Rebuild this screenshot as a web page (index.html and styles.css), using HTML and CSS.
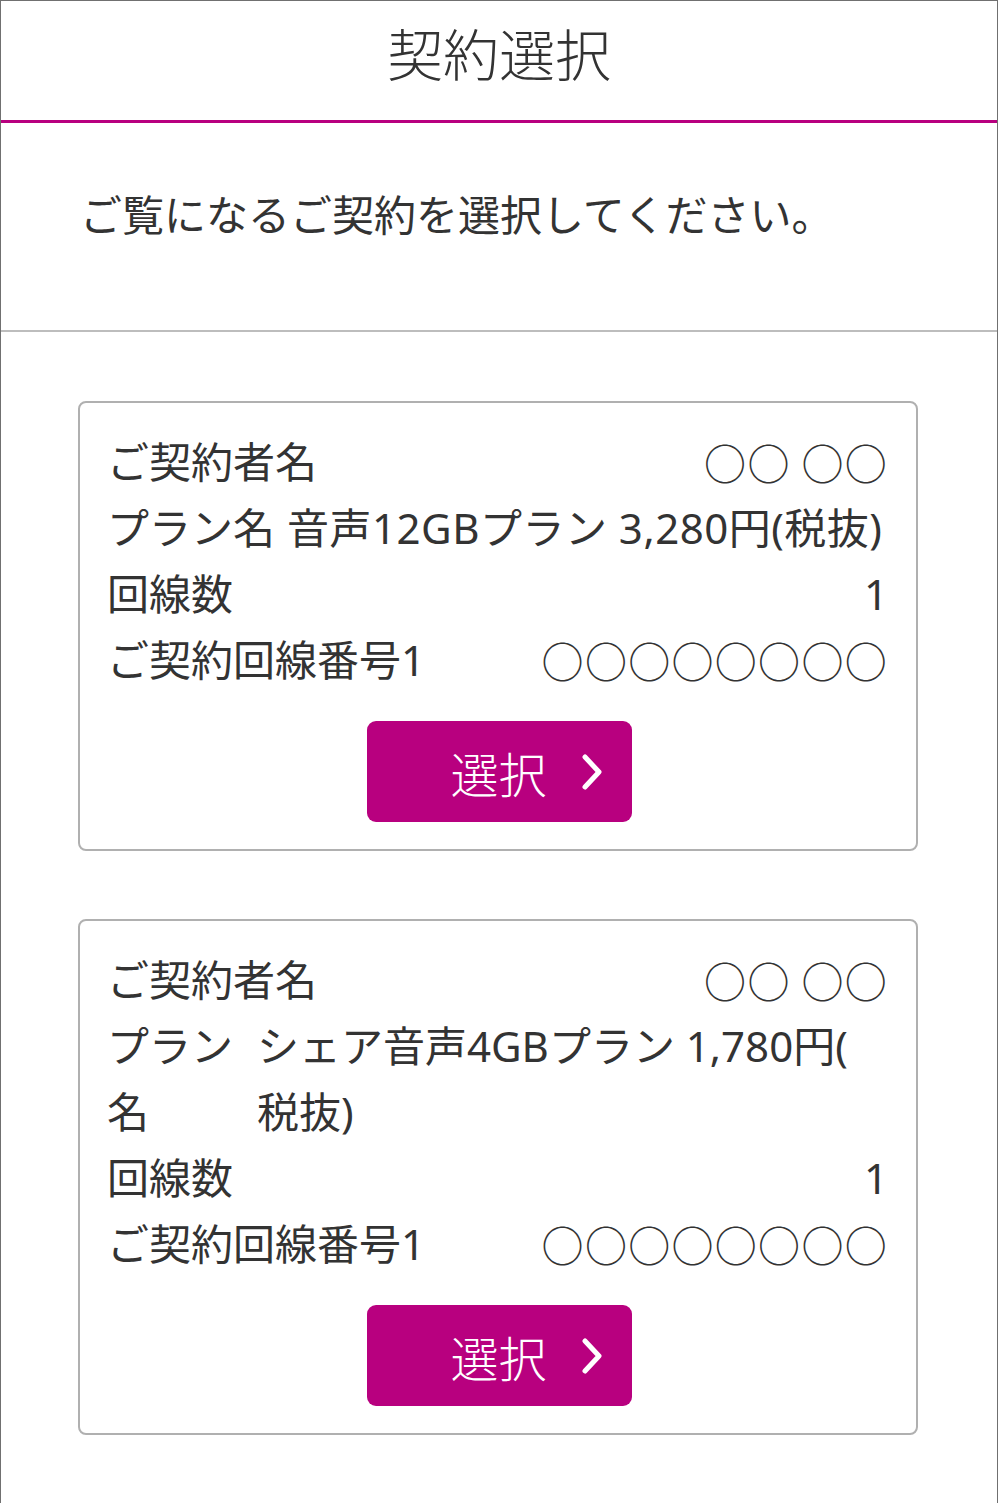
FILE: index.html
```html
<!DOCTYPE html>
<html lang="ja">
<head>
<meta charset="utf-8">
<title>契約選択</title>
<link rel="stylesheet" href="styles.css">
</head>
<body>
<div class="frame">
  <header class="header">
    <h1 class="title">契約選択</h1>
  </header>
  <div class="intro">
    <p class="intro-text">ご覧になるご契約を選択してください。</p>
  </div>
  <div class="list">
    <section class="card">
      <div class="row"><span class="label">ご契約者名</span><span class="value right circles">○○ ○○</span></div>
      <div class="row"><span class="label">プラン名</span><span class="value plan">音声12GBプラン 3,280円(税抜)</span></div>
      <div class="row"><span class="label">回線数</span><span class="value right">1</span></div>
      <div class="row"><span class="label">ご契約回線番号1</span><span class="value right circles">○○○○○○○○</span></div>
      <button class="select-btn" type="button"><span class="btn-text">選択</span><svg class="chev" width="22" height="36" viewBox="0 0 22 36"><polyline points="4,3 18,18 4,33" fill="none" stroke="#fff" stroke-width="5" stroke-linecap="round" stroke-linejoin="round"/></svg></button>
    </section>
    <section class="card">
      <div class="row"><span class="label">ご契約者名</span><span class="value right circles">○○ ○○</span></div>
      <div class="row row-wrap"><span class="label label-narrow">プラン名</span><span class="value plan">シェア音声4GBプラン 1,780円(税抜)</span></div>
      <div class="row"><span class="label">回線数</span><span class="value right">1</span></div>
      <div class="row"><span class="label">ご契約回線番号1</span><span class="value right circles">○○○○○○○○</span></div>
      <button class="select-btn" type="button"><span class="btn-text">選択</span><svg class="chev" width="22" height="36" viewBox="0 0 22 36"><polyline points="4,3 18,18 4,33" fill="none" stroke="#fff" stroke-width="5" stroke-linecap="round" stroke-linejoin="round"/></svg></button>
    </section>
  </div>
</div>
</body>
</html>
```

FILE: styles.css
```css
* { box-sizing: border-box; }

html, body {
  margin: 0;
  padding: 0;
  background: #ffffff;
}

body {
  font-family: "Noto Sans", "Noto Sans CJK JP", sans-serif;
  color: #333333;
}

.frame {
  width: 998px;
  min-height: 1502px;
  border: 1px solid #707070;
  background: #ffffff;
}

.header {
  height: 122px;
  display: flex;
  align-items: center;
  justify-content: center;
  padding-bottom: 18px;
  border-bottom: 3px solid #b8007f;
}

.title {
  margin: 0;
  font-family: "Noto Sans CJK JP", sans-serif;
  font-size: 56px;
  font-weight: 300;
  line-height: 1;
  color: #333333;
}

.intro {
  height: 209px;
  display: flex;
  align-items: center;
  padding: 0 0 28px 79px;
  border-bottom: 2px solid #bdbdbd;
}

.intro-text {
  margin: 0;
  font-family: "Noto Sans CJK JP", sans-serif;
  font-size: 42px;
  font-weight: 400;
  line-height: 1;
  color: #333333;
}

.list {
  display: flex;
  flex-direction: column;
  gap: 68px;
  padding: 69px 79px 68px 77px;
}

.card {
  border: 2px solid #b0b0b0;
  border-radius: 8px;
  padding: 26px 28px 27px 30px;
  display: flex;
  flex-direction: column;
}

.row {
  display: flex;
  justify-content: space-between;
  align-items: flex-start;
  font-size: 42px;
  line-height: 66px;
  color: #333333;
}

.label {
  flex: none;
  white-space: nowrap;
  margin-left: -3px;
}

.value {
  flex: 1 1 auto;
  min-width: 0;
}

.value.right {
  text-align: right;
  white-space: nowrap;
}

.circles {
  font-family: "Noto Sans CJK JP", sans-serif;
  letter-spacing: 1.3px;
}

.value.plan {
  margin-left: 12px;
  text-align: left;
  line-break: anywhere;
  letter-spacing: 0.5px;
}

.row-wrap .label-narrow {
  width: 3em;
  white-space: normal;
}

.row-wrap .value.plan {
  margin-left: 24px;
  margin-right: 22px;
  letter-spacing: 0;
}

.select-btn {
  align-self: center;
  margin-top: 28px;
  width: 265px;
  height: 101px;
  border: none;
  border-radius: 9px;
  background: #b8007f;
  color: #ffffff;
  display: flex;
  align-items: center;
  justify-content: center;
  gap: 34px;
  padding: 0 0 0 55px;
  font-family: "Noto Sans CJK JP", sans-serif;
  cursor: pointer;
}

.btn-text {
  font-size: 48px;
  font-weight: 300;
  line-height: 1;
}

.chev {
  display: block;
  flex: none;
}
```
